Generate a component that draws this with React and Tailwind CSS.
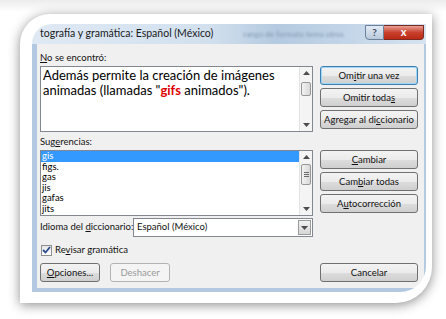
import React from 'react';

const ui = { fontFamily: '"Lato", "Open Sans", sans-serif' };

const Btn = ({ children, primary, disabled, className = '' }) => (
  <div
    className={`h-[19px] flex items-center justify-center rounded-[3px] border text-[9.5px] leading-none whitespace-nowrap ${
      primary ? 'border-[#3c7fb1] shadow-[inset_0_0_0_1px_#9fd5f5]' : disabled ? 'border-[#b3b3b3]' : 'border-[#707070]'
    } ${disabled ? 'text-[#9a9a9a] bg-[#f4f4f4]' : 'text-[#111] bg-[linear-gradient(#f3f3f3_0%,#ebebeb_50%,#dddddd_51%,#cfcfcf_100%)]'} ${className}`}
  >
    {children}
  </div>
);

const Arrow = ({ up }) => (
  <svg width="7" height="4" viewBox="0 0 7 4">
    <path d={up ? 'M0 4 L3.5 0 L7 4 Z' : 'M0 0 L7 0 L3.5 4 Z'} fill="#4d4d4d" />
  </svg>
);

const ScrollBar = ({ thumbTop, thumbH, grip }) => (
  <div className="w-[13px] h-full bg-[#f4f4f4] border-l border-[#e3e3e3] flex flex-col items-center justify-between py-[4px] relative">
    <Arrow up />
    <div
      className="absolute left-[1px] w-[10px] rounded-[2px] border border-[#979797] bg-[linear-gradient(90deg,#f2f2f2,#d8d8d8)] flex flex-col items-center justify-center gap-[1px]"
      style={{ top: thumbTop, height: thumbH }}
    >
      {grip && [0, 1, 2].map((i) => <div key={i} className="w-[5px] h-px bg-[#6c6c6c]" />)}
    </div>
    <Arrow />
  </div>
);

export default function App() {
  const suggestions = ['gis', 'figs.', 'gas', 'jis', 'gafas', 'jits'];
  return (
    <div className="w-[446px] h-[319px] bg-[linear-gradient(#ececec,#ffffff_12px)] pt-[14px] pl-[20px] overflow-hidden" style={ui}>
      <div className="w-[412px] h-[289px] bg-white rounded-tl-[30px] rounded-br-[36px] shadow-[0_2px_12px_rgba(0,0,0,0.45)] pt-[10px] pl-[12px]">
        <div className="w-[394px] h-[268px] rounded-tl-[20px] rounded-br-[26px] overflow-hidden flex flex-col">
          {/* barra de titulo */}
          <div className="h-[20px] shrink-0 flex items-center bg-[linear-gradient(90deg,#dfe9f4_0%,#d2e0ee_45%,#b4cae0_62%,#c3d5e8_80%,#d6e3f0_100%)] relative">
            <span className="pl-[8px] text-[10.5px] text-[#1a1a1a]">tografía y gramática: Español (México)</span>
            <span className="ml-[30px] text-[8px] text-[#8298b1] blur-[0.8px]">rango de formato tema otros</span>
            <div className="absolute right-[2px] top-[1px] flex">
              <div className="w-[19px] h-[15px] rounded-bl-[4px] border border-[#6a7f99] bg-[linear-gradient(#e3ebf4,#b9c9db)] flex items-center justify-center text-[10px] font-bold text-[#3c4f66]">?</div>
              <div className="w-[40px] h-[15px] rounded-br-[4px] border border-l-0 border-[#7a2a22] bg-[linear-gradient(#e9a093,#c8402d_50%,#b92a15)] flex items-center justify-center text-[11px] font-bold text-white">x</div>
            </div>
          </div>

          {/* cuerpo */}
          <div className="flex-1 bg-[#f0f0f0] border-l-[5px] border-b-[4px] border-r-[2px] border-[#b3c9e1] pl-[3px] pt-[6px] text-[9.5px] text-[#111]">
            <div className="flex">
              <div className="w-[273px]">
                <div className="h-[16px] leading-[16px]"><u>N</u>o se encontró:</div>
                <div className="h-[66px] border border-[#828790] bg-white flex">
                  <div className="flex-1 px-[2px] pt-[1px] text-[13px] leading-[15px] text-black">
                    <div>Además permite la creación de imágenes</div>
                    <div>animadas (llamadas "<b className="text-[#e00000]">gifs</b> animados").</div>
                  </div>
                  <ScrollBar thumbTop={15} thumbH={14} />
                </div>
              </div>
              <div className="ml-[7px] w-[98px] mt-[16px] flex flex-col gap-[3px]">
                <Btn primary>Om<u>i</u>tir una vez</Btn>
                <Btn>Omitir toda<u>s</u></Btn>
                <Btn>Agregar al di<u>c</u>cionario</Btn>
              </div>
            </div>

            <div className="flex mt-[2px]">
              <div className="w-[273px]">
                <div className="h-[16px] leading-[16px]">Sug<u>e</u>rencias:</div>
                <div className="h-[66px] border border-[#828790] bg-white flex">
                  <div className="flex-1 flex flex-col">
                    {suggestions.map((s, i) => (
                      <div
                        key={s}
                        className={`h-[10.6px] leading-[10.6px] pl-[1px] ${i === 0 ? 'bg-[#3399ff] text-white' : 'text-black'}`}
                      >
                        {s}
                      </div>
                    ))}
                  </div>
                  <ScrollBar thumbTop={13} thumbH={21} grip />
                </div>
              </div>
              <div className="ml-[7px] w-[98px] mt-[16px] flex flex-col gap-[3px]">
                <Btn><u>C</u>ambiar</Btn>
                <Btn>Cam<u>b</u>iar todas</Btn>
                <Btn>A<u>u</u>tocorrección</Btn>
              </div>
            </div>

            <div className="flex items-center mt-[2px] h-[19px]">
              <div className="w-[93px] whitespace-nowrap">Idioma del <u>d</u>iccionario:</div>
              <div className="w-[180px] h-[19px] border border-[#828790] bg-white flex items-center">
                <span className="flex-1 pl-[3px]">Español (México)</span>
                <div className="w-[13px] h-[15px] mr-px border border-[#9a9a9a] bg-[linear-gradient(#f2f2f2,#d6d6d6)] flex items-center justify-center">
                  <Arrow />
                </div>
              </div>
            </div>

            <div className="flex items-center mt-[7px] h-[12px] gap-[3px]">
              <div className="w-[11px] h-[11px] ml-px border border-[#8e8f8f] bg-[linear-gradient(#e6e6e6,#ffffff)] flex items-center justify-center">
                <svg width="9" height="8" viewBox="0 0 9 8">
                  <path d="M1 4 L3.5 6.5 L8 1" fill="none" stroke="#2a4c8a" strokeWidth="1.8" />
                </svg>
              </div>
              <span>Re<u>v</u>isar gramática</span>
            </div>

            <div className="flex mt-[7px]">
              <Btn className="w-[60px]"><u>O</u>pciones...</Btn>
              <Btn disabled className="w-[60px] ml-[10px]">Deshacer</Btn>
              <Btn className="w-[98px] ml-[150px]">Cancelar</Btn>
            </div>
          </div>
        </div>
      </div>
    </div>
  );
}
